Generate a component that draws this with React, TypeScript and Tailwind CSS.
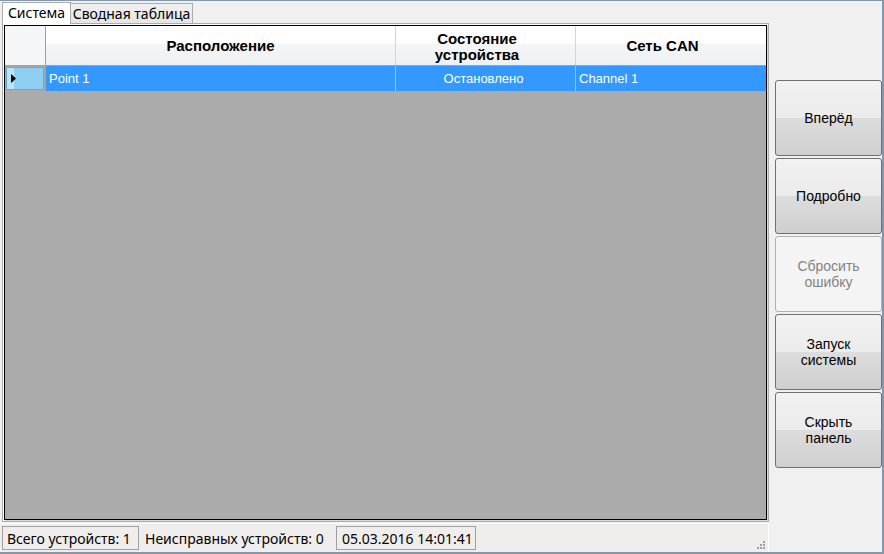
import { useState } from "react";

const buttons = [
  { label: ["Вперёд"], disabled: false },
  { label: ["Подробно"], disabled: false },
  { label: ["Сбросить", "ошибку"], disabled: true },
  { label: ["Запуск", "системы"], disabled: false },
  { label: ["Скрыть", "панель"], disabled: false },
];

function SideButton({ label, disabled }: { label: string[]; disabled: boolean }) {
  return (
    <button
      disabled={disabled}
      className={
        disabled
          ? "flex h-[76px] w-[107px] flex-col items-center justify-center rounded-[3px] border border-[#adb2b5] bg-[#f4f4f4] text-[14px] leading-[16px] text-[#838383]"
          : "flex h-[76px] w-[107px] flex-col items-center justify-center rounded-[3px] border border-[#707070] bg-[linear-gradient(#f2f2f2_0%,#ebebeb_50%,#dddddd_50%,#cfcfcf_100%)] text-[14px] leading-[16px] text-black"
      }
    >
      {label.map((l) => (
        <span key={l}>{l}</span>
      ))}
    </button>
  );
}

export default function App() {
  const [tab, setTab] = useState(0);

  return (
    <div className="flex h-[554px] w-[884px] flex-col overflow-hidden border-t border-r-2 border-b-2 border-[#8397ad] bg-[#f0f0f0] font-['Liberation_Sans',Arial,sans-serif]">
      <div className="flex min-h-0 flex-1 flex-row">
        {/* left: tabs + grid + status */}
        <div className="flex w-[769px] flex-col">
          <div className="flex h-[22px] flex-row items-end pl-[2px]">
            <div
              onClick={() => setTab(0)}
              className="relative z-10 -mb-px flex h-[22px] w-[69px] items-center justify-center border border-b-0 border-[#acacac] bg-white pb-[2px] font-['Noto_Sans',sans-serif] text-[14px] text-black"
            >
              Система
            </div>
            <div
              onClick={() => setTab(1)}
              className="flex h-[20px] w-[122px] items-center justify-center border border-b-0 border-l-0 border-[#acacac] bg-[linear-gradient(#f0f0f0,#e5e5e5)] font-['Noto_Sans',sans-serif] text-[14px] text-black"
            >
              Сводная таблица
            </div>
          </div>

          <div className="ml-[2px] flex h-[499px] w-[767px] border border-[#acacac] bg-white p-px">
            <div className="flex flex-1 flex-col border border-black bg-[#ababab] shadow-[1px_1px_0_#d9d9d9]">
              {/* header */}
              <div className="flex h-[40px] flex-row border-b border-[#a0a0a0] pt-[2px] text-[15px] font-bold text-black">
                <div className="-mt-[2px] w-[41px] border-r border-[#a0a0a0] bg-[#f5f6f8]" />
                <div className="-mt-[2px] flex w-[350px] items-center justify-center border-r border-[#d5d5d5] bg-[linear-gradient(#ffffff_0%,#ffffff_45%,#f4f5f7_45%,#eff0f2_100%)] pt-[2px]">
                  Расположение
                </div>
                <div className="-mt-[2px] flex w-[180px] flex-col items-center justify-center border-r border-[#d5d5d5] bg-[linear-gradient(#ffffff_0%,#ffffff_45%,#f4f5f7_45%,#eff0f2_100%)] pt-[2px] pr-[17px] leading-[16px]">
                  <span>Состояние</span>
                  <span>устройства</span>
                </div>
                <div className="-mt-[2px] flex flex-1 items-center justify-center bg-[linear-gradient(#ffffff_0%,#ffffff_45%,#f4f5f7_45%,#eff0f2_100%)] pt-[2px] pr-[17px]">
                  Сеть CAN
                </div>
              </div>
              {/* selected row */}
              <div className="flex h-[25px] flex-row text-[13px] text-white">
                <div className="flex w-[41px] items-center border-r border-[#a0a0a0] bg-[#ababab] p-[1px]">
                  <div className="flex h-full w-full items-center border border-[#6aa9c9] bg-[linear-gradient(90deg,#b9e3f8_0%,#b9e3f8_20%,#8fd0f2_20%,#8fd0f2_100%)] pl-[4px]">
                    <svg width="5" height="9" viewBox="0 0 5 9">
                      <path d="M0 0 L5 4.5 L0 9 Z" fill="#000" />
                    </svg>
                  </div>
                </div>
                <div className="flex w-[350px] items-center border-r border-[#8ec4f8] bg-[#3399ff] pl-[3px]">
                  Point 1
                </div>
                <div className="flex w-[180px] items-center justify-center border-r border-[#8ec4f8] bg-[#3399ff] pr-[4px]">
                  Остановлено
                </div>
                <div className="flex flex-1 items-center bg-[#3399ff] pl-[3px]">Channel 1</div>
              </div>
            </div>
          </div>

          {/* status strip */}
          <div className="relative mt-px flex h-[29px] flex-row items-center gap-px border-t border-r border-white bg-[#f0eeec] pl-[2px] font-['Noto_Sans',sans-serif] text-[14px] text-black">
            <div className="flex h-[24px] w-[137px] items-center border border-[#a0a0a0] pl-[4px]">
              Всего устройств: 1
            </div>
            <div className="flex h-[24px] w-[195px] items-center pl-[5px]">Неисправных устройств: 0</div>
            <div className="flex h-[24px] w-[140px] items-center border border-[#a0a0a0] pl-[5px]">
              05.03.2016 14:01:41
            </div>
            <svg className="absolute right-[2px] bottom-[2px]" width="10" height="10" viewBox="0 0 10 10">
              <rect x="7" y="1" width="2" height="2" fill="#a0a0a0" />
              <rect x="4" y="4" width="2" height="2" fill="#a0a0a0" />
              <rect x="7" y="4" width="2" height="2" fill="#a0a0a0" />
              <rect x="1" y="7" width="2" height="2" fill="#a0a0a0" />
              <rect x="4" y="7" width="2" height="2" fill="#a0a0a0" />
              <rect x="7" y="7" width="2" height="2" fill="#a0a0a0" />
            </svg>
          </div>
        </div>

        {/* right: buttons */}
        <div className="flex flex-col gap-[2px] pt-[79px] pl-[6px] font-['Liberation_Sans',Arial,sans-serif]">
          {buttons.map((b) => (
            <SideButton key={b.label.join(" ")} label={b.label} disabled={b.disabled} />
          ))}
        </div>
      </div>
    </div>
  );
}
